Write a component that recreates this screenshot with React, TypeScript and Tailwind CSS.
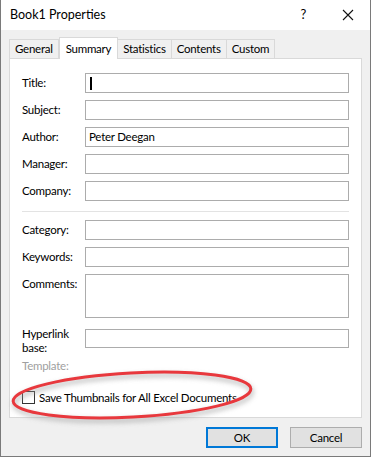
import React from 'react';

const font = "font-['Lato','Noto_Sans','Liberation_Sans',sans-serif]";

const fields: { label: string; value?: string; cursor?: boolean }[] = [
  { label: 'Title:', cursor: true },
  { label: 'Subject:' },
  { label: 'Author:', value: 'Peter Deegan' },
  { label: 'Manager:' },
  { label: 'Company:' },
];

const tabs = ['General', 'Summary', 'Statistics', 'Contents', 'Custom'];

const Field = ({ label, value, cursor, tall }: { label: React.ReactNode; value?: string; cursor?: boolean; tall?: boolean }) => (
  <div className="flex items-start">
    <div className="w-[63px] shrink-0 pt-[2px] leading-[15px]">{label}</div>
    <div className={`flex-1 border border-[#acacac] bg-white ${tall ? 'h-[44px]' : 'h-[20px]'} flex items-center px-[3px]`}>
      {cursor && <span className="w-[2px] h-[13px] bg-black ml-[1px]" />}
      {value}
    </div>
  </div>
);

const App = () => {
  return (
    <div className={`${font} text-[11.5px] tracking-[-0.25px] text-black relative w-[371px] h-[457px] bg-[#f0f0f0] border-x border-b border-[#7a7a7a] flex flex-col`}>
      {/* title bar */}
      <div className="h-[30px] bg-white flex items-center pl-[9px] pr-[14px] shrink-0">
        <span className="text-[12.5px] tracking-normal flex-1">Book1 Properties</span>
        <span className="text-[13px] mr-[36px]">?</span>
        <svg width="12" height="12" viewBox="0 0 12 12" className="mr-[2px]">
          <path d="M1 1 L11 11 M11 1 L1 11" stroke="#111" strokeWidth="1.1" />
        </svg>
      </div>

      {/* tabs */}
      <div className="flex items-end pl-[8px] mt-[7px] h-[21px] shrink-0 relative z-10">
        {tabs.map(t =>
          t === 'Summary' ? (
            <div key={t} className="h-[22px] px-[6px] bg-white border border-b-0 border-[#d9d9d9] flex items-start pt-[2px] -mb-px">
              {t}
            </div>
          ) : (
            <div key={t} className="h-[19px] px-[5px] bg-[#f0f0f0] border border-b-0 border-[#d9d9d9] -ml-px first:ml-0 flex items-center">
              {t}
            </div>
          )
        )}
      </div>

      {/* panel */}
      <div className="mx-[8px] h-[360px] bg-white border border-[#d9d9d9] pt-[14px] pl-[12px] pr-[12px] flex flex-col shrink-0">
        <div className="flex flex-col gap-[7px]">
          {fields.map(f => (
            <Field key={f.label} label={f.label} value={f.value} cursor={f.cursor} />
          ))}
        </div>
        <div className="h-px bg-[#e3e3e3] mt-[10px] mb-[8px]" />
        <div className="flex flex-col gap-[7px]">
          <Field label="Category:" />
          <Field label="Keywords:" />
          <Field label="Comments:" tall />
        </div>
        <div className="mt-[11px]">
          <div className="flex items-start">
            <div className="w-[63px] shrink-0 leading-[14px] -mt-[2px]">
              <div>Hyperlink</div>
              <div>base:</div>
            </div>
            <div className="flex-1 border border-[#acacac] bg-white h-[19px]" />
          </div>
        </div>
        <div className="mt-[3px] text-[#a0a0a0] leading-[15px]">Template:</div>
        <div className="mt-[16px] flex items-center gap-[4px]">
          <span className="w-[13px] h-[13px] border border-[#333] bg-white shrink-0" />
          <span>Save Thumbnails for All Excel Documents</span>
        </div>
      </div>

      {/* buttons */}
      <div className="flex justify-end gap-[12px] pr-[8px] mt-[9px]">
        <button className="w-[72px] h-[21px] bg-[#e1e1e1] border-2 border-[#0078d7]">OK</button>
        <button className="w-[72px] h-[21px] bg-[#e1e1e1] border border-[#adadad]">Cancel</button>
      </div>

      {/* red highlight ring drawn over the dialog */}
      <svg className="absolute inset-0 pointer-events-none" width="371" height="457">
        <defs>
          <filter id="sh" x="-20%" y="-50%" width="140%" height="200%">
            <feGaussianBlur stdDeviation="2.5" />
          </filter>
        </defs>
        <ellipse cx="132" cy="398" rx="119" ry="22" transform="rotate(-3 132 398)" fill="none" stroke="#9a9a9a" strokeWidth="4" opacity="0.6" filter="url(#sh)" />
        <ellipse cx="131" cy="395" rx="119" ry="22" transform="rotate(-3 131 395)" fill="none" stroke="#e8383d" strokeWidth="3" />
      </svg>
    </div>
  );
};

export default App;
